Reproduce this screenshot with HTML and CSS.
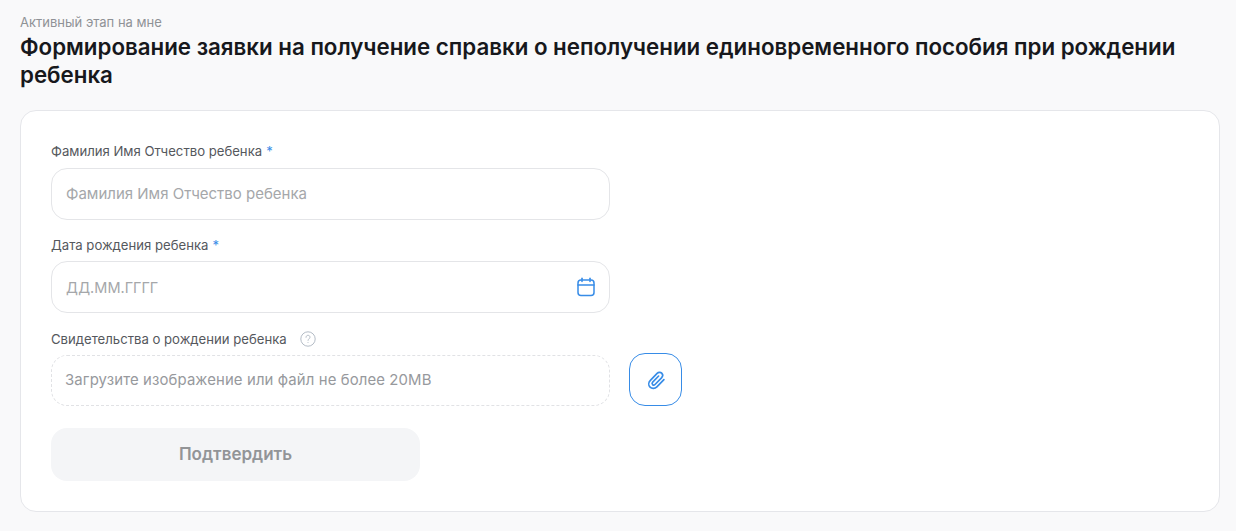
FILE: index.html
```html
<!DOCTYPE html>
<html lang="ru">

<head>
    <meta charset="UTF-8">
    <meta name="viewport" content="width=device-width, initial-scale=1.0">
    <title>Формирование заявки</title>
    <link rel="stylesheet" href="styles.css">
</head>

<body>

    <div class="stage-caption">Активный этап на мне</div>
    <h1 class="page-title">Формирование заявки на получение справки о неполучении единовременного пособия при рождении ребенка</h1>

    <form class="form-card">
        <div class="field">
            <label class="field-label">Фамилия Имя Отчество ребенка <span class="required">*</span></label>
            <div class="input-box">
                <span class="placeholder">Фамилия Имя Отчество ребенка</span>
            </div>
        </div>

        <div class="field field-date">
            <label class="field-label label-date">Дата рождения ребенка <span class="required">*</span></label>
            <div class="input-box">
                <span class="placeholder placeholder-date">ДД.ММ.ГГГГ</span>
                <svg class="calendar-icon" width="18" height="20" viewBox="0 0 18 20" fill="none" stroke="#378ce7" stroke-width="1.5" stroke-linecap="round" stroke-linejoin="round">
                    <rect x="1" y="3" width="16" height="15.5" rx="3"/>
                    <path d="M1 8h16"/>
                    <path d="M5 1.2v3.3"/>
                    <path d="M13 1.2v3.3"/>
                </svg>
            </div>
        </div>

        <div class="field">
            <label class="field-label label-upload">Свидетельства о рождении ребенка
                <svg class="help-icon" width="16" height="16" viewBox="0 0 16 16" fill="none" stroke="#b4bcc6" stroke-width="1">
                    <circle cx="8" cy="8" r="7.2"/>
                    <path d="M6 6.3c0-1.2.9-2 2-2s2 .8 2 1.9c0 1.6-2 1.6-2 3.2" stroke-linecap="round"/>
                    <path d="M8 11.2v.8"/>
                </svg>
            </label>
            <div class="upload-row">
                <div class="upload-box">
                    <span class="upload-text">Загрузите изображение или файл не более 20MB</span>
                </div>
                <button type="button" class="attach-btn">
                    <svg width="22" height="22" viewBox="0 0 20 20" fill="none" stroke="#378ce7" stroke-width="1.5" stroke-linecap="round" stroke-linejoin="round">
                        <path d="M17.2 9.6l-6.4 6.6c-1.8 1.8-4.6 1.9-6.2.3-1.7-1.7-1.5-4.4.3-6.2l6.1-6.3c1.2-1.2 3.1-1.3 4.2-.2 1.2 1.2 1 3-.2 4.2l-5.9 6.1c-.6.6-1.6.7-2.2.1-.6-.6-.5-1.6.1-2.2l5.4-5.6"/>
                    </svg>
                </button>
            </div>
        </div>

        <button type="button" class="submit-btn">Подтвердить</button>
    </form>

</body>

</html>
```

FILE: styles.css
```css
* {
    margin: 0;
    padding: 0;
    box-sizing: border-box;
    font-family: Inter, "Noto Sans", sans-serif;
}

body {
    background-color: #f9f9fa;
    color: #1a1a1f;
    padding: 15px 16px 19px 20px;
}

.stage-caption {
    font-size: 13px;
    line-height: 15px;
    color: #8f9296;
    margin-bottom: 3px;
}

.page-title {
    font-size: 22.3px;
    font-weight: 600;
    line-height: 28px;
    color: #17181c;
    margin-bottom: 21px;
}

.form-card {
    background-color: white;
    border: 1px solid #e5e6ea;
    border-radius: 16px;
    padding: 31px 30px 30px 30px;
    height: 402px;
}

.field {
    margin-bottom: 16px;
}

.field-date {
    margin-bottom: 17px;
}

.field-label {
    display: flex;
    align-items: center;
    gap: 4px;
    font-size: 13.15px;
    line-height: 18px;
    color: #55585d;
    margin-bottom: 8px;
}

.label-date {
    margin-bottom: 7px;
}

.label-upload {
    margin-bottom: 5px;
}

.required {
    color: #378ce7;
}

.input-box {
    width: 559px;
    height: 52px;
    border: 1px solid #e4e5e8;
    border-radius: 16px;
    padding: 0 14px;
    display: flex;
    align-items: center;
    justify-content: space-between;
}

.placeholder,
.upload-text {
    font-size: 15px;
    color: #a5a7aa;
    margin-bottom: 2px;
}

.placeholder-date {
    font-size: 14.5px;
    margin-bottom: 0;
}

.upload-text {
    font-size: 14.9px;
    letter-spacing: 0.12px;
    color: #97999d;
}

.help-icon {
    margin-left: 9px;
}

.upload-row {
    display: flex;
    align-items: flex-end;
    gap: 19px;
}

.upload-box {
    width: 559px;
    height: 51px;
    border: 1px dashed #e1e2e5;
    border-radius: 16px;
    padding: 0 13px;
    display: flex;
    align-items: center;
}

.attach-btn {
    width: 53px;
    height: 53px;
    background-color: white;
    border: 1px solid #378ce7;
    border-radius: 16px;
    display: flex;
    align-items: center;
    justify-content: center;
}

.submit-btn {
    display: block;
    width: 369px;
    height: 53px;
    margin-top: 22px;
    padding-bottom: 2px;
    background-color: #f4f5f7;
    border: none;
    border-radius: 16px;
    font-size: 17px;
    font-weight: 600;
    color: #929497;
}
```
